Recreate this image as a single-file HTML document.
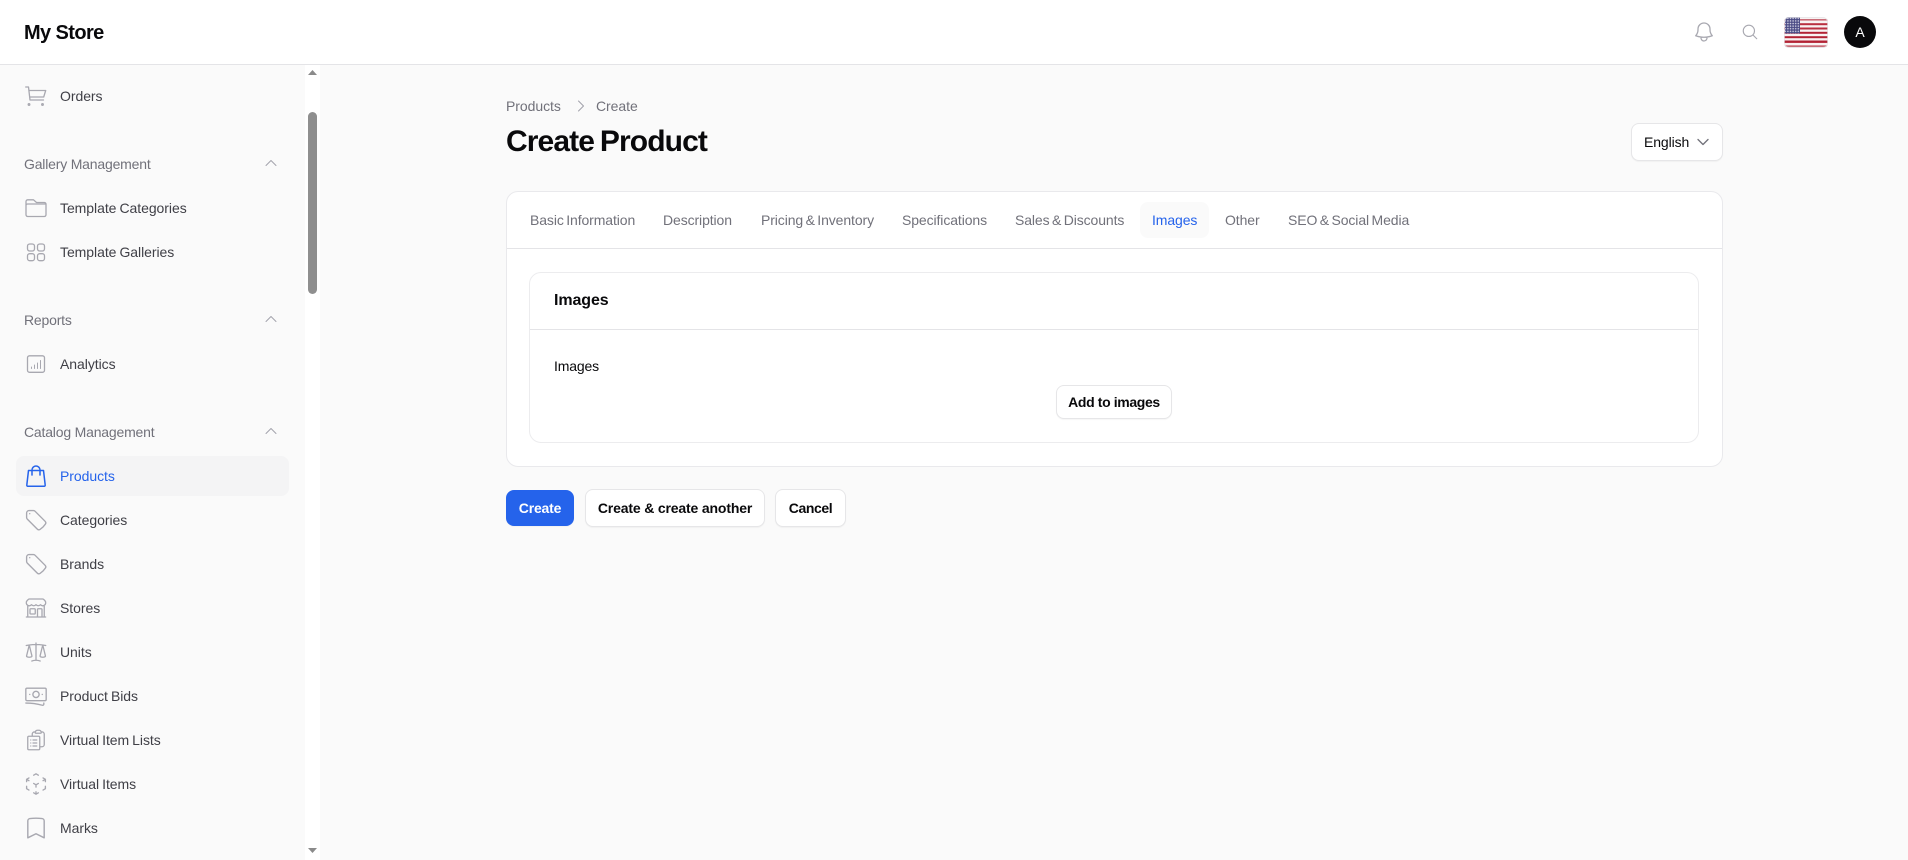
<!DOCTYPE html>
<html lang="en"><head><meta charset="utf-8"><title>Create Product</title>
<style>
html,body{margin:0;padding:0;width:1908px;height:860px;overflow:hidden;background:#fafafa;font-family:"Liberation Sans",sans-serif}
.a{position:absolute;white-space:nowrap}
.i{position:absolute;left:24px;width:24px;height:24px;fill:none;stroke:#a8a8b0;stroke-width:1.3;stroke-linecap:round;stroke-linejoin:round}
.n{position:absolute;left:60px;font-size:14px;line-height:20px;color:#3f3f46;white-space:nowrap;letter-spacing:-.05px;word-spacing:-.8px}
.g{position:absolute;left:24px;font-size:14px;line-height:20px;color:#71717a;white-space:nowrap;letter-spacing:-.19px}
.c{position:absolute;left:263px;width:16px;height:16px;fill:none;stroke:#a1a1aa;stroke-width:1.4;stroke-linecap:round;stroke-linejoin:round}
.t{position:absolute;top:210px;font-size:14px;line-height:20px;color:#71717a;white-space:nowrap;letter-spacing:-.1px;word-spacing:-1.3px}
.b{position:absolute;box-sizing:border-box;background:#fff;border:1px solid #e6e6e8;border-radius:8px;font-size:14px;font-weight:700;color:#09090b;text-align:center;white-space:nowrap;box-shadow:0 1px 1px rgba(0,0,0,.04)}
</style></head><body>
<div class="a" style="left:0;top:0;width:1908px;height:64px;background:#fff;border-bottom:1px solid #e4e4e7"></div>
<div class="a" style="left:24px;top:19px;font-size:20px;line-height:28px;font-weight:700;color:#09090b;letter-spacing:-.6px">My Store</div>
<svg class="i" style="left:1692px;top:20px" viewBox="0 0 24 24"><path d="M14.857 17.082a23.848 23.848 0 005.454-1.31A8.967 8.967 0 0118 9.75v-.7V9A6 6 0 006 9v.75a8.967 8.967 0 01-2.312 6.022c1.733.64 3.56 1.085 5.455 1.31m5.714 0a24.255 24.255 0 01-5.714 0m5.714 0a3 3 0 11-5.714 0"/></svg>
<svg class="i" style="left:1741px;top:23px;width:18px;height:18px;stroke-width:1.5" viewBox="0 0 24 24"><path d="M21 21l-5.197-5.197m0 0A7.5 7.5 0 105.196 5.196a7.5 7.500 0 0010.607 10.607z"/></svg>
<svg class="a" style="left:1784px;top:17px" width="44" height="31" viewBox="0 0 44 31"><defs><clipPath id="f"><rect width="44" height="31" rx="5"/></clipPath><pattern id="s" width="2.6" height="2.6" patternUnits="userSpaceOnUse"><rect width="2.6" height="2.6" fill="#4a4a84"/><circle cx="1.3" cy="1.3" r=".8" fill="#d5d5e6"/></pattern></defs><g clip-path="url(#f)"><rect width="44" height="31" fill="#f8f2f2"/><rect y="2" width="44" height="1.600" fill="#c96d78"/><rect y="6.200" width="44" height="2" fill="#b92f40"/><rect y="10.500" width="44" height="2" fill="#b92f40"/><rect y="14.800" width="44" height="2" fill="#b22234"/><rect y="19.200" width="44" height="2" fill="#b22234"/><rect y="23.500" width="44" height="2.400" fill="#b22234"/><rect y="28.300" width="44" height="1.800" fill="#c96d78"/><rect x="1" y="0" width="15" height="16.500" fill="url(#s)"/></g><rect x=".5" y=".5" width="43" height="30" rx="4.500" fill="none" stroke="#e4e4e7" stroke-opacity=".7"/></svg>
<div class="a" style="left:1844px;top:16px;width:32px;height:32px;border-radius:50%;background:#09090b;color:#fff;font-size:14px;line-height:32px;text-align:center">A</div>

<div class="a" style="left:305px;top:65px;width:15px;height:795px;background:#fff"></div>
<div class="a" style="left:308px;top:112px;width:9px;height:182px;background:#8f8f8f;border-radius:5px"></div>
<svg class="a" style="left:308px;top:70px" width="9" height="5"><path d="M4.500 0L9 5H0z" fill="#8a8a8a"/></svg>
<svg class="a" style="left:308px;top:848px" width="9" height="5"><path d="M0 0H9L4.500 5z" fill="#8a8a8a"/></svg>

<svg class="i" style="top:84px" viewBox="0 0 24 24"><path d="M1.700 3H4.500L6 16H19.500M5 6.500H21.700L19.700 13H5.800"/><circle cx="5" cy="20.500" r=".8"/><circle cx="18.500" cy="20.500" r=".8"/></svg>
<div class="n" style="top:86px">Orders</div>
<div class="g" style="top:154px">Gallery Management</div>
<svg class="c" style="top:155px" viewBox="0 0 24 24"><path d="M4.500 15.750l7.500-7.500 7.500 7.500"/></svg>
<svg class="i" style="top:196px" viewBox="0 0 24 24"><path d="M2 9.500V5.500a1.700 1.700 0 011.700-1.700h5.800l3 2.700h7.800A1.700 1.700 0 0122 8.200v10.600a1.700 1.700 0 01-1.700 1.700H3.700A1.700 1.700 0 012 18.800V9.500a1.500 1.500 0 011.500-1.500H22"/></svg>
<div class="n" style="top:198px">Template Categories</div>
<svg class="i" style="top:240px" viewBox="0 0 24 24"><rect x="3.500" y="4" width="7" height="7" rx="2.200"/><rect x="13.500" y="4" width="7" height="7" rx="2.200"/><rect x="3.500" y="13.700" width="7" height="7" rx="2.200"/><rect x="13.500" y="13.700" width="7" height="7" rx="2.200"/></svg>
<div class="n" style="top:242px">Template Galleries</div>
<div class="g" style="top:310px">Reports</div>
<svg class="c" style="top:311px" viewBox="0 0 24 24"><path d="M4.500 15.750l7.500-7.500 7.500 7.500"/></svg>
<svg class="i" style="top:352px" viewBox="0 0 24 24"><rect x="3.500" y="3.800" width="17" height="16.500" rx="2"/><path d="M7.500 16.500v-1.500M10.500 16.500v-3.500M13.500 16.500v-5.500M16.500 16.500v-8" stroke-width="1"/></svg>
<div class="n" style="top:354px">Analytics</div>
<div class="g" style="top:422px">Catalog Management</div>
<svg class="c" style="top:423px" viewBox="0 0 24 24"><path d="M4.500 15.750l7.500-7.500 7.500 7.500"/></svg>
<div class="a" style="left:16px;top:456px;width:273px;height:40px;background:#f4f4f5;border-radius:8px"></div>
<svg class="i" style="top:464px;stroke:#2563eb;stroke-width:1.5" viewBox="0 0 24 24"><path d="M4.500 6.500H19.500L21.200 21a1 1 0 01-1 1.200H3.800a1 1 0 01-1-1.200zM8 11V6a4 4 0 018 0v5"/></svg>
<div class="n" style="top:466px;color:#2563eb">Products</div>
<svg class="i" style="top:508px" viewBox=".5 .5 23 23"><path d="M9.568 3H5.250A2.250 2.250 0 003 5.250v4.318c0 .597.237 1.170.659 1.591l9.581 9.581c.699.699 1.780.872 2.607.33a18.095 18.095 0 005.223-5.223c.542-.827.369-1.908-.33-2.607L11.160 3.660A2.250 2.250 0 009.568 3z"/><path d="M6 6h.008v.008H6V6z"/></svg>
<div class="n" style="top:510px">Categories</div>
<svg class="i" style="top:552px" viewBox=".5 .5 23 23"><path d="M9.568 3H5.250A2.250 2.250 0 003 5.250v4.318c0 .597.237 1.170.659 1.591l9.581 9.581c.699.699 1.780.872 2.607.33a18.095 18.095 0 005.223-5.223c.542-.827.369-1.908-.33-2.607L11.160 3.660A2.250 2.250 0 009.568 3z"/><path d="M6 6h.008v.008H6V6z"/></svg>
<div class="n" style="top:554px">Brands</div>
<svg class="i" style="top:596px" viewBox="0 0 24 24"><path d="M13.500 21v-7.500a.75.75 0 01.75-.75h3a.75.75 0 01.75.75V21m-4.500 0H2.360m11.140 0H18m0 0h3.640m-1.390 0V9.349m-16.500 11.650V9.350m0 0a3.001 3.001 0 003.750-.615A2.993 2.993 0 009.750 9.750c.896 0 1.700-.393 2.250-1.016a2.993 2.993 0 002.250 1.016c.896 0 1.700-.393 2.250-1.016a3.001 3.001 0 003.750.614m-16.500 0a3.004 3.004 0 01-.621-4.720L4.318 3.440A1.500 1.500 0 015.378 3h13.243a1.500 1.500 0 011.060.44l1.190 1.189a3 3 0 01-.621 4.720m-13.500 8.650h3.750a.75.75 0 00.75-.75V13.500a.75.75 0 00-.75-.75H6.750a.75.75 0 00-.75.75v3.750c0 .415.336.75.75.75z"/></svg>
<div class="n" style="top:598px">Stores</div>
<svg class="i" style="top:640px" viewBox="0 0 24 24"><path d="M12 3v17.250m0 0c-1.472 0-2.882.265-4.185.75M12 20.250c1.472 0 2.882.265 4.185.75M18.750 4.970A48.416 48.416 0 0012 4.500c-2.291 0-4.545.16-6.750.47m13.500 0c1.010.143 2.010.317 3 .52m-3-.52l2.620 10.726c.122.499-.106 1.028-.589 1.202a5.988 5.988 0 01-2.031.352 5.988 5.988 0 01-2.031-.352c-.483-.174-.711-.703-.59-1.202L18.750 4.971zm-16.500.52c.99-.203 1.990-.377 3-.52m0 0l2.620 10.726c.122.499-.106 1.028-.589 1.202a5.989 5.989 0 01-2.031.352 5.989 5.989 0 01-2.031-.352c-.483-.174-.711-.703-.59-1.202L5.250 4.971z"/></svg>
<div class="n" style="top:642px">Units</div>
<svg class="i" style="top:684px" viewBox=".5 .5 23 23"><path d="M2.250 18.750a60.070 60.070 0 0115.797 2.101c.727.198 1.453-.342 1.453-1.096V18.750M3.375 4.500H20.625c.621 0 1.125.504 1.125 1.125v9.750c0 .621-.504 1.125-1.125 1.125H3.375a1.125 1.125 0 01-1.125-1.125V5.625c0-.621.504-1.125 1.125-1.125zM15 10.500a3 3 0 11-6 0 3 3 0 016 0zm3 0h.008v.008H18V10.500zm-12 0h.008v.008H6V10.500z"/></svg>
<div class="n" style="top:686px">Product Bids</div>
<svg class="i" style="top:728px" viewBox="0 0 24 24"><path d="M9 12h3.750M9 15h3.750M9 18h3.750m3 .75H18a2.250 2.250 0 002.250-2.250V6.108c0-1.135-.845-2.098-1.976-2.192a48.424 48.424 0 00-1.123-.08m-5.801 0c-.065.21-.1.433-.1.664 0 .414.336.75.75.75h4.500a.75.75 0 00.75-.75 2.250 2.250 0 00-.1-.664m-5.800 0A2.251 2.251 0 0113.500 2.250H15c1.012 0 1.867.668 2.150 1.586m-5.800 0c-.376.023-.75.05-1.124.08C9.095 4.010 8.250 4.973 8.250 6.108V8.250m0 0H4.875c-.621 0-1.125.504-1.125 1.125v11.250c0 .621.504 1.125 1.125 1.125h9.750c.621 0 1.125-.504 1.125-1.125V9.375c0-.621-.504-1.125-1.125-1.125H8.250zM6.750 12h.008v.008H6.750V12zm0 3h.008v.008H6.750V15zm0 3h.008v.008H6.750V18z"/></svg>
<div class="n" style="top:730px">Virtual Item Lists</div>
<svg class="i" style="top:772px" viewBox=".5 .5 23 23"><path d="M21 7.500l-2.250-1.313M21 7.500v2.250m0-2.250l-2.250 1.313M3 7.500l2.250-1.313M3 7.500l2.250 1.313M3 7.500v2.250m9 3l2.250-1.313M12 12.750l-2.250-1.313M12 12.750V15m0 6.750l2.250-1.313M12 21.750V19.500m0 2.250l-2.250-1.313m0-16.875L12 2.250l2.250 1.313M21 14.250v2.250l-2.250 1.313m-13.500 0L3 16.500v-2.250"/></svg>
<div class="n" style="top:774px">Virtual Items</div>
<svg class="i" style="top:816px" viewBox="1 1 22 22"><path d="M17.593 3.322c1.100.128 1.907 1.077 1.907 2.185V21L12 17.250 4.500 21V5.507c0-1.108.806-2.057 1.907-2.185a48.507 48.507 0 0111.186 0z"/></svg>
<div class="n" style="top:818px">Marks</div>

<div class="a" style="left:506px;top:96px;font-size:14px;line-height:20px;color:#71717a;letter-spacing:-.05px">Products</div>
<svg class="a" style="left:573px;top:98px;fill:none;stroke:#a1a1aa;stroke-width:1.5;stroke-linecap:round;stroke-linejoin:round" width="16" height="16" viewBox="0 0 24 24"><path d="M8.250 4.500l7.500 7.500-7.500 7.500"/></svg>
<div class="a" style="left:596px;top:96px;font-size:14px;line-height:20px;color:#71717a;letter-spacing:-.05px">Create</div>
<div class="a" style="left:506px;top:124px;font-size:30px;line-height:36px;font-weight:700;color:#09090b;letter-spacing:-.9px;word-spacing:-1.5px">Create Product</div>
<div class="b" style="left:1631px;top:123px;width:92px;height:38px;font-weight:400;text-align:left;padding-left:12px;line-height:36px;letter-spacing:-.1px">English</div>
<svg class="a" style="left:1695px;top:134px;fill:none;stroke:#71717a;stroke-width:2;stroke-linecap:round;stroke-linejoin:round" width="16" height="16" viewBox="0 0 24 24"><path d="M19.500 8.250l-7.500 7.500-7.500-7.500"/></svg>

<div class="a" style="left:506px;top:191px;width:1217px;height:276px;box-sizing:border-box;background:#fff;border:1px solid #e9e9ec;border-radius:12px"></div>
<div class="a" style="left:507px;top:248px;width:1215px;height:1px;background:#e4e4e7"></div>
<div class="t" style="left:530px">Basic Information</div>
<div class="t" style="left:663px">Description</div>
<div class="t" style="left:761px">Pricing &amp; Inventory</div>
<div class="t" style="left:902px">Specifications</div>
<div class="t" style="left:1015px">Sales &amp; Discounts</div>
<div class="a" style="left:1140px;top:202px;width:69px;height:36px;background:#fafafa;border-radius:8px"></div>
<div class="t" style="left:1152px;color:#2563eb">Images</div>
<div class="t" style="left:1225px">Other</div>
<div class="t" style="left:1288px">SEO &amp; Social Media</div>

<div class="a" style="left:529px;top:272px;width:1170px;height:171px;box-sizing:border-box;background:#fff;border:1px solid #ececee;border-radius:12px"></div>
<div class="a" style="left:530px;top:329px;width:1168px;height:1px;background:#e4e4e7"></div>
<div class="a" style="left:554px;top:289px;font-size:16px;line-height:24px;font-weight:700;color:#09090b;letter-spacing:-.1px">Images</div>
<div class="a" style="left:554px;top:356px;font-size:14px;line-height:20px;color:#09090b;letter-spacing:-.15px">Images</div>
<div class="b" style="left:1056px;top:385px;width:116px;height:34px;line-height:32px;letter-spacing:-.37px">Add to images</div>

<div class="b" style="left:506px;top:490px;width:68px;height:36px;line-height:36px;background:#2563eb;border:0;color:#fff;letter-spacing:-.2px">Create</div>
<div class="b" style="left:585px;top:489px;width:180px;height:38px;line-height:36px;letter-spacing:-.16px">Create &amp; create another</div>
<div class="b" style="left:775px;top:489px;width:71px;height:38px;line-height:36px;letter-spacing:-.4px">Cancel</div>
</body></html>
